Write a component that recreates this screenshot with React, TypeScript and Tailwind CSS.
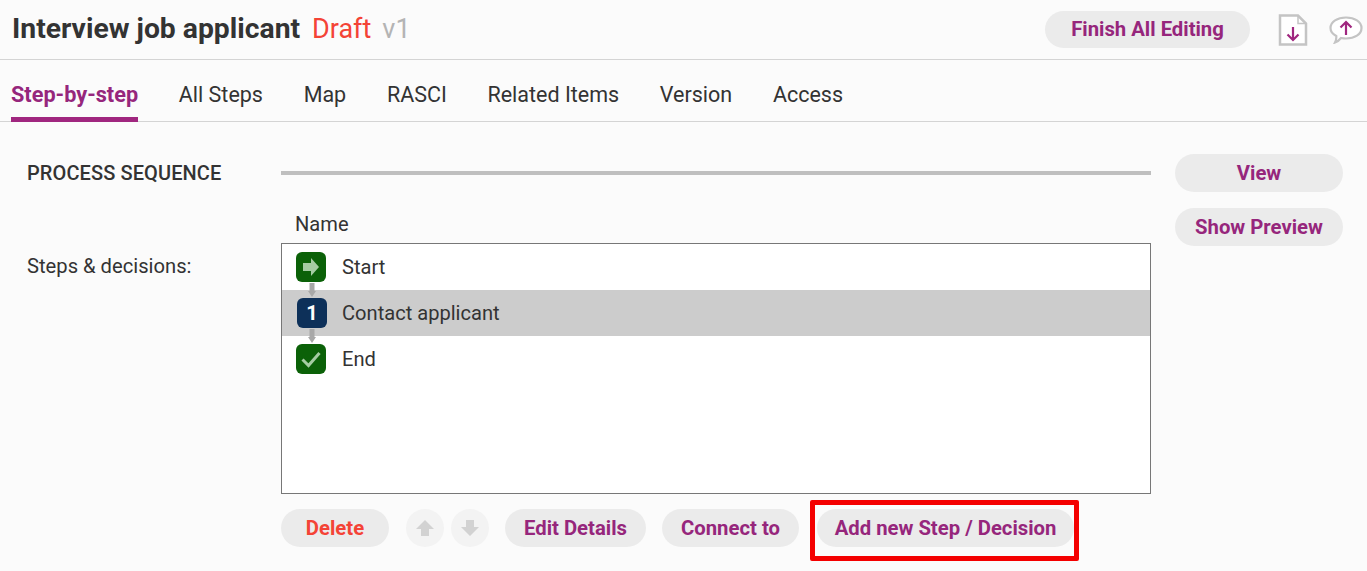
const pill = 'flex items-center justify-center rounded-full bg-[#ebebeb] text-[20.3px] font-bold text-[#96267c]'

function FileDown() {
  return (
    <svg width="30" height="32" viewBox="0 0 30 32" fill="none">
      <path d="M2 1.500H20L28 9.500V30.500H2V1.500Z" fill="#fff" stroke="#c4c4c4" strokeWidth="2.500" />
      <path d="M20 1.500V9.500H28" stroke="#c4c4c4" strokeWidth="1.500" />
      <path d="M15 13V26M9.500 20.500L15 26L20.500 20.500" stroke="#a0267f" strokeWidth="2.200" />
    </svg>
  )
}

function BubbleUp() {
  return (
    <svg width="34" height="28" viewBox="0 0 34 28" fill="none">
      <path d="M17 1.500C25.500 1.500 32.500 5.500 32.500 12C32.500 18.500 25.500 22.500 17 22.500C15 22.500 13.500 22.300 12 22C10.500 24 8.500 25.500 6 26.500C7 24.500 7.500 22.500 7.300 20C3.500 18 1.500 15.300 1.500 12C1.500 5.500 8.500 1.500 17 1.500Z" fill="#fff" stroke="#c4c4c4" strokeWidth="2.200" />
      <path d="M17 19V6M11.500 11.500L17 6L22.500 11.500" stroke="#a0267f" strokeWidth="2.200" />
    </svg>
  )
}

function ArrowBtn({ up }: { up?: boolean }) {
  return (
    <div className="flex h-[38px] w-[38px] items-center justify-center rounded-full bg-[#f3f3f3]">
      <svg width="20" height="18" viewBox="0 0 20 18" className={up ? '' : 'rotate-180'}>
        <path d="M10 1L19 10H14V17H6V10H1Z" fill="#d2d2d2" />
      </svg>
    </div>
  )
}

function Connector() {
  return (
    <svg width="8" height="14" viewBox="0 0 8 14" className="absolute left-[26px] top-[-7px] z-10">
      <path d="M1.500 0H6.500V8H8L4 14L0 8H1.500Z" fill="#a8a8a8" />
    </svg>
  )
}

function Row({ label, selected, connector, children }: { label: string; selected?: boolean; connector?: boolean; children: React.ReactNode }) {
  return (
    <div className={`relative flex h-[46px] items-center ${selected ? 'bg-[#cccccc]' : ''}`}>
      {connector && <Connector />}
      <div className="ml-[14px] w-[46px] shrink-0">{children}</div>
      <span className="text-[20.1px] text-[#333]">{label}</span>
    </div>
  )
}

export default function App() {
  const tabs = ['All Steps', 'Map', 'RASCI', 'Related Items', 'Version', 'Access']

  return (
    <div className="h-[571px] w-[1367px] overflow-hidden bg-[#fbfbfb] font-['Roboto',sans-serif]">
      {/* title */}
      <div className="flex h-[60px] items-center border-b border-[#d4d4d4] pl-[12px] pr-[4px]">
        <span className="text-[28.3px] font-bold text-[#333]">Interview job applicant</span>
        <span className="ml-[12px] text-[27px] text-[#f44336]">Draft</span>
        <span className="ml-[11px] text-[27px] text-[#b4b4b4]">v1</span>
        <button className={`${pill} ml-auto h-[37px] w-[205px]`}>Finish All Editing</button>
        <div className="ml-[28px] flex items-center gap-[21px]">
          <FileDown />
          <BubbleUp />
        </div>
      </div>

      {/* tabs */}
      <div className="flex h-[62px] gap-[40.7px] border-b border-[#d4d4d4] pl-[11px]">
        <div className="flex h-[62px] items-center border-b-[5px] border-[#a0267f] pt-[13px] text-[21.7px] font-bold text-[#96267c]">Step-by-step</div>
        {tabs.map(t => (
          <div key={t} className="flex items-center pt-[9px] text-[21.5px] text-[#333]">{t}</div>
        ))}
      </div>

      {/* body */}
      <div className="flex pl-[27px] pr-[24px] pt-[32px]">
        <div className="w-[254px] shrink-0">
          <div className="flex h-[38px] items-center text-[20px] font-medium tracking-[0.1px] text-[#333]">PROCESS SEQUENCE</div>
          <div className="mt-[59px] text-[20.2px] text-[#333]">Steps &amp; decisions:</div>
        </div>

        <div className="w-[870px] shrink-0">
          <div className="flex h-[38px] items-center">
            <div className="h-[4px] w-full bg-[#bfbfbf]" />
          </div>
          <div className="mt-[19px] h-[32px] pl-[14px] text-[20.1px] leading-[26px] text-[#333]">Name</div>
          <div className="h-[251px] border border-[#777] bg-white">
            <Row label="Start">
              <div className="flex h-[30px] w-[30px] items-center justify-center rounded-[6px] bg-[#0b6108]">
                <svg width="16" height="18" viewBox="0 0 16 18"><path d="M0 5H8V0L16 9L8 18V13H0Z" fill="#a5cca3" /></svg>
              </div>
            </Row>
            <Row label="Contact applicant" selected connector>
              <div className="ml-[1px] flex h-[30px] w-[30px] items-center justify-center rounded-[6px] bg-[#0d3059] text-[20px] font-bold text-white">1</div>
            </Row>
            <Row label="End" connector>
              <div className="flex h-[30px] w-[30px] items-center justify-center rounded-[6px] bg-[#0b6108]">
                <svg width="22" height="18" viewBox="0 0 22 18" fill="none"><path d="M2.500 9.500L8.500 15.500L19.500 3" stroke="#a5cca3" strokeWidth="3" /></svg>
              </div>
            </Row>
          </div>

          <div className="mt-[15px] flex items-center">
            <button className={`${pill} h-[38px] w-[108px] !text-[#f44336]`}>Delete</button>
            <div className="ml-[17px] flex gap-[7px]">
              <ArrowBtn up />
              <ArrowBtn />
            </div>
            <button className={`${pill} ml-[16px] h-[38px] w-[141px]`}>Edit Details</button>
            <button className={`${pill} ml-[16px] h-[38px] w-[137px]`}>Connect to</button>
            <div className="relative ml-[18px]">
              <button className={`${pill} h-[38px] w-[257px]`}>Add new Step / Decision</button>
              <div className="absolute left-[-7px] top-[-9px] h-[61px] w-[269px] rounded-[2px] border-[5px] border-[#f40000]" />
            </div>
          </div>
        </div>

        <div className="ml-[24px] flex flex-col gap-[16px]">
          <button className={`${pill} h-[38px] w-[168px]`}>View</button>
          <button className={`${pill} h-[38px] w-[168px]`}>Show Preview</button>
        </div>
      </div>
    </div>
  )
}
